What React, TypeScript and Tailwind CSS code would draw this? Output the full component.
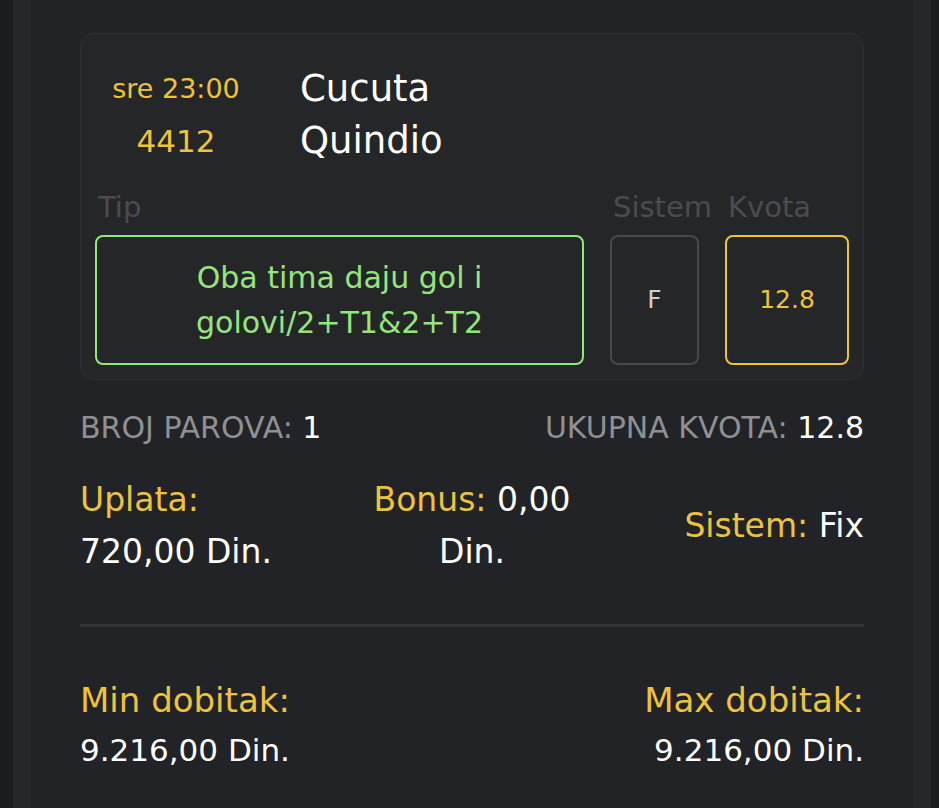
export default function App() {
  const font = "font-['DejaVu_Sans',sans-serif]";
  return (
    <div className={`min-h-screen bg-[#1b1c1f] ${font}`}>
      <div className="ml-[13px] w-[918px] min-h-[808px] bg-[#222326] border-x-[17px] border-[#262729] px-[50px] pt-[33px]">
        {/* Match card */}
        <div className="rounded-[14px] border border-[#2f3033] bg-[#252628] px-[14px] pt-[29px] pb-[14px]">
          <div className="flex h-[52px] items-center">
            <div className="w-[162px] text-center text-[27px] text-[#eec33a]">sre 23:00</div>
            <div className="ml-[43px] text-[37px] text-white">Cucuta</div>
          </div>
          <div className="flex h-[52px] items-center">
            <div className="w-[162px] text-center text-[31px] text-[#eec33a]">4412</div>
            <div className="ml-[43px] text-[37px] text-white">Quindio</div>
          </div>

          <div className="mt-[24px] grid grid-cols-[489px_89px_124px] gap-x-[26px]">
            <div className="pl-[3px] text-[29px] leading-[32px] text-[#4b4c4f]">Tip</div>
            <div className="pl-[3px] whitespace-nowrap text-[29px] leading-[32px] text-[#4b4c4f]">Sistem</div>
            <div className="pl-[3px] text-[29px] leading-[32px] text-[#4b4c4f]">Kvota</div>

            <div className="mt-[12px] flex h-[130px] items-center justify-center rounded-[8px] border-2 border-[#8fe878] px-4 text-center text-[30px] leading-[45px] text-[#95e57d]">
              Oba tima daju gol i<br />golovi/2+T1&amp;2+T2
            </div>
            <div className="mt-[12px] flex h-[130px] items-center justify-center rounded-[8px] border-2 border-[#48494c] text-[25px] text-[#d0d0d0]">
              F
            </div>
            <div className="mt-[12px] flex h-[130px] items-center justify-center rounded-[8px] border-2 border-[#eec33a] text-[25px] text-[#eec33a]">
              12.8
            </div>
          </div>
        </div>

        {/* Summary */}
        <div className="mt-[33px] flex justify-between text-[30px] leading-[30px]">
          <div className="text-[#8f9093]">
            BROJ PAROVA: <span className="text-white">1</span>
          </div>
          <div className="text-[#8f9093]">
            UKUPNA KVOTA: <span className="text-white">12.8</span>
          </div>
        </div>

        <div className="mt-[31px] flex items-center text-[33px] leading-[52px]">
          <div className="flex-1">
            <div className="text-[#eec33a]">Uplata:</div>
            <div className="text-white">720,00 Din.</div>
          </div>
          <div className="flex-1 text-center">
            <div className="whitespace-nowrap">
              <span className="text-[#eec33a]">Bonus:</span> <span className="text-white">0,00</span>
            </div>
            <div className="text-white">Din.</div>
          </div>
          <div className="flex-1 text-right">
            <span className="text-[#eec33a]">Sistem:</span> <span className="text-white">Fix</span>
          </div>
        </div>

        <div className="mt-[46px] h-[3px] bg-[#333437]" />

        <div className="mt-[48px] flex justify-between leading-[50px]">
          <div>
            <div className="text-[34px] text-[#eec33a]">Min dobitak:</div>
            <div className="text-[31px] text-white">9.216,00 Din.</div>
          </div>
          <div className="text-right">
            <div className="text-[34px] text-[#eec33a]">Max dobitak:</div>
            <div className="text-[31px] text-white">9.216,00 Din.</div>
          </div>
        </div>
      </div>
    </div>
  );
}
